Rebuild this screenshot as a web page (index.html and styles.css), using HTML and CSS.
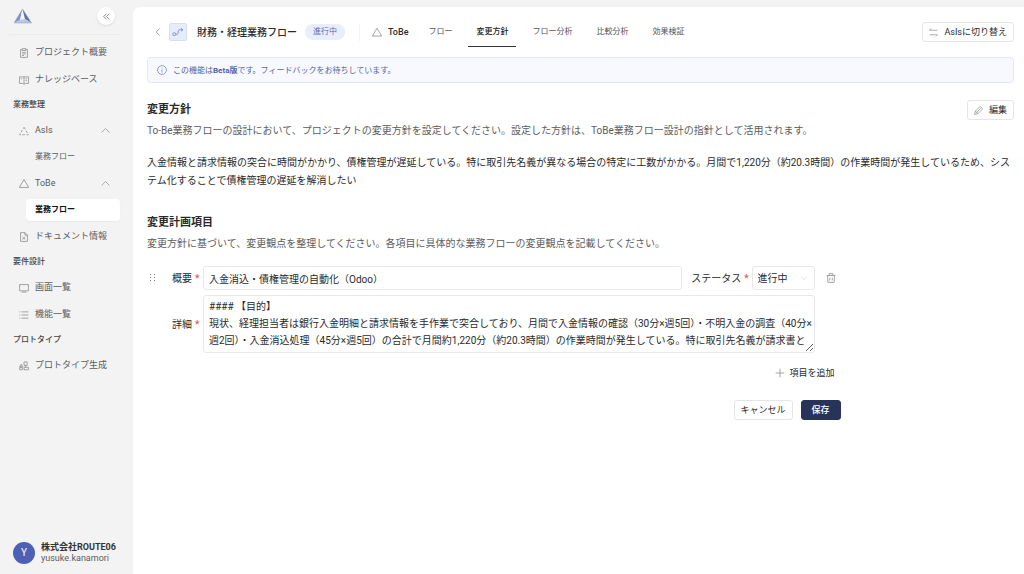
FILE: index.html
```html
<!DOCTYPE html>
<html lang="ja">
<head>
    <meta charset="UTF-8">
    <meta name="viewport" content="width=device-width, initial-scale=1.0">
    <title>変更方針</title>
    <link rel="stylesheet" href="styles.css">
</head>
<body>
    <aside class="sidebar">
        <div class="sidebar-head">
            <a class="logo" href="#" aria-label="ホーム">
                <svg width="18" height="17" viewBox="0 0 18 17">
                    <path d="M8.500 1 L0 15 L6 12 Z" fill="#7f93cf"/>
                    <path d="M8.500 1 L6 12 L11 11 Z" fill="#f1f4fb"/>
                    <path d="M8.500 1 L17.500 15 L11 11 Z" fill="#5a6ea8"/>
                    <path d="M0 15 L6 12 L11 11 L17.500 15 Z" fill="#b9c6e4"/>
                    <path d="M8.500 1 L0 15 H17.500 Z" fill="none" stroke="#8d9bc4" stroke-width=".5"/>
                </svg>
            </a>
            <button class="collapse-btn" aria-label="サイドバーを閉じる">
                <svg class="icon" width="9" height="9" viewBox="0 0 16 16"><path d="M8 3 L3 8 L8 13 M13 3 L8 8 L13 13"/></svg>
            </button>
        </div>

        <nav class="nav">
            <a class="nav-item" href="#">
                <svg class="icon" width="10" height="10" viewBox="0 0 16 16"><path d="M5 2.500H2.500V15H13.500V2.500H11M5 1H11V4H5ZM5 7H11M5 9.500H11M5 12H8"/></svg>
                プロジェクト概要
            </a>
            <a class="nav-item" href="#">
                <svg class="icon" width="10" height="10" viewBox="0 0 16 16"><path d="M8 3H.7V13.500H6L8 15L10 13.500H15.300V3ZM8 3V14M10.500 6H13M10.500 9H13M3 6H5"/></svg>
                ナレッジベース
            </a>

            <h2 class="nav-title">業務整理</h2>
            <button class="nav-item">
                <svg class="icon" width="10" height="10" viewBox="0 0 16 16"><path d="M8 2L15 14H1Z" stroke-dasharray="4 2.500"/></svg>
                AsIs
                <svg class="icon chevron" width="9" height="9" viewBox="0 0 16 16"><path d="M1 11.500L8 4.500L15 11.500"/></svg>
            </button>
            <a class="nav-sub" href="#">業務フロー</a>
            <button class="nav-item">
                <svg class="icon" width="10" height="10" viewBox="0 0 16 16"><path d="M8 1L15.500 13.500H.5Z"/></svg>
                ToBe
                <svg class="icon chevron" width="9" height="9" viewBox="0 0 16 16"><path d="M1 11.500L8 4.500L15 11.500"/></svg>
            </button>
            <a class="nav-sub active" href="#">業務フロー</a>
            <a class="nav-item" href="#">
                <svg class="icon" width="10" height="10" viewBox="0 0 16 16"><path d="M2.500 1H9.500L13.500 5V15H2.500ZM9.500 1V5H13.500M5.500 8L10 12M10 8L5.500 12"/></svg>
                ドキュメント情報
            </a>

            <h2 class="nav-title">要件設計</h2>
            <a class="nav-item" href="#">
                <svg class="icon" width="10" height="10" viewBox="0 0 16 16"><path d="M1 2.500H15V12.500H1ZM4 14.500H12"/></svg>
                画面一覧
            </a>
            <a class="nav-item" href="#">
                <svg class="icon" width="10" height="10" viewBox="0 0 16 16"><path d="M4 3H15M4 8H15M4 13H15M.5 3H2M.5 8H2M.5 13H2"/></svg>
                機能一覧
            </a>

            <h2 class="nav-title">プロトタイプ</h2>
            <a class="nav-item" href="#">
                <svg class="icon" width="10" height="10" viewBox="0 0 16 16"><path d="M8 1.500H13V7H8ZM3.500 5L6 9H1ZM1 10.500H5.500V14H1ZM10.500 7V10M8 10H15V14H8Z"/></svg>
                プロトタイプ生成
            </a>
        </nav>

        <div class="user">
            <span class="avatar">Y</span>
            <div class="user-text">
                <strong>株式会社ROUTE06</strong>
                <span>yusuke.kanamori</span>
            </div>
        </div>
    </aside>

    <main class="main">
        <header class="topbar">
            <a class="back" href="#" aria-label="戻る">
                <svg class="icon" width="10" height="10" viewBox="0 0 16 16"><path d="M11 2L5 8L11 14"/></svg>
            </a>
            <span class="flow-icon">
                <svg class="icon" width="12" height="12" viewBox="0 0 16 16"><circle cx="3" cy="11" r="2"/><path d="M5 11H7C9.500 11 7 5 9.500 5H14M12 3L14.500 5L12 7"/></svg>
            </span>
            <h1 class="title">財務・経理業務フロー</h1>
            <span class="badge">進行中</span>
            <span class="mode">
                <svg class="icon" width="10" height="10" viewBox="0 0 16 16"><path d="M8 2L15.500 14.500H.5Z"/></svg>
                ToBe
            </span>
            <nav class="tabs">
                <a class="tab" href="#">フロー</a>
                <a class="tab active" href="#">変更方針</a>
                <a class="tab" href="#">フロー分析</a>
                <a class="tab" href="#">比較分析</a>
                <a class="tab" href="#">効果検証</a>
            </nav>
            <button class="btn switch-btn">
                <svg class="icon" width="9" height="9" viewBox="0 0 16 16"><path d="M4 1L1 4H15M12 15L15 12H1"/></svg>
                AsIsに切り替え
            </button>
        </header>

        <div class="notice">
            <svg class="icon" width="10" height="10" viewBox="0 0 16 16"><circle cx="8" cy="8" r="7"/><path d="M8 7V12M8 4V5.500"/></svg>
            <p>この機能は<strong>Beta版</strong>です。フィードバックをお待ちしています。</p>
        </div>

        <section class="section">
            <div class="section-head">
                <h2>変更方針</h2>
                <button class="btn">
                    <svg class="icon" width="9" height="9" viewBox="0 0 16 16"><path d="M1 15L2.500 9L10 1.500C11.500 0 16 4.500 14.500 6L7 13.500ZM4 12L12 4M2.500 9L7 13.500"/></svg>
                    編集
                </button>
            </div>
            <p class="lead">To-Be業務フローの設計において、プロジェクトの変更方針を設定してください。設定した方針は、ToBe業務フロー設計の指針として活用されます。</p>
            <p class="policy">入金情報と請求情報の突合に時間がかかり、債権管理が遅延している。特に取引先名義が異なる場合の特定に工数がかかる。月間で1,220分（約20.3時間）の作業時間が発生しているため、システム化することで債権管理の遅延を解消したい</p>
        </section>

        <section class="section plan">
            <h2>変更計画項目</h2>
            <p class="lead">変更方針に基づいて、変更観点を整理してください。各項目に具体的な業務フローの変更観点を記載してください。</p>

            <form class="plan-form">
                <div class="item">
                    <button type="button" class="icon-btn" aria-label="並べ替え">
                        <svg class="grip" width="6" height="8" viewBox="0 0 6 8"><path d="M0 0H1V1H0ZM4 0H5V1H4ZM0 3H1V4H0ZM4 3H5V4H4ZM0 6H1V7H0ZM4 6H5V7H4Z"/></svg>
                    </button>
                    <label class="label" for="summary">概要<span class="required">*</span></label>
                    <div class="item-row">
                        <input class="field" type="text" id="summary" value="入金消込・債権管理の自動化（Odoo）">
                        <label class="label" for="status">ステータス<span class="required">*</span></label>
                        <div class="select-wrap">
                            <select class="field" id="status">
                                <option>進行中</option>
                            </select>
                            <svg class="icon" width="8" height="8" viewBox="0 0 16 16"><path d="M2 5L8 11L14 5"/></svg>
                        </div>
                    </div>
                    <button type="button" class="icon-btn trash" aria-label="削除">
                        <svg class="icon" width="10" height="10" viewBox="0 0 16 16"><path d="M1 4H15M5 4V1H11V4M2.500 4L3 15H13L13.500 4M6 7.500V12M10 7.500V12"/></svg>
                    </button>
                    <label class="label detail-label" for="detail">詳細<span class="required">*</span></label>
                    <textarea class="field detail" id="detail">#### 【目的】
現状、経理担当者は銀行入金明細と請求情報を手作業で突合しており、月間で入金情報の確認（30分×週5回）・不明入金の調査（40分×週2回）・入金消込処理（45分×週5回）の合計で月間約1,220分（約20.3時間）の作業時間が発生している。特に取引先名義が請求書と</textarea>
                </div>

                <div class="add-row">
                    <button type="button" class="add-btn">
                        <svg class="icon" width="10" height="10" viewBox="0 0 16 16"><path d="M8 1V15M1 8H15"/></svg>
                        項目を追加
                    </button>
                </div>
                <div class="actions">
                    <button type="button" class="btn">キャンセル</button>
                    <button type="submit" class="btn primary">保存</button>
                </div>
            </form>
        </section>
    </main>
</body>
</html>
```
FILE: styles.css
```css
* {
    margin: 0;
    padding: 0;
    box-sizing: border-box;
}

body {
    display: flex;
    min-height: 100vh;
    background: #f3f3f4;
    color: #2a2a2a;
    font-family: Roboto, "Noto Sans CJK JP", sans-serif;
    font-size: 10px;
    line-height: 17px;
}

button,
input,
select,
textarea {
    font: inherit;
    color: inherit;
}

button {
    border: none;
    background: none;
    cursor: pointer;
}

a {
    color: inherit;
    text-decoration: none;
}

.icon {
    flex: none;
    fill: none;
    stroke: #888;
    stroke-width: 1.2;
}

/* Sidebar */
.sidebar {
    flex: none;
    display: flex;
    flex-direction: column;
    width: 133px;
    padding: 0 13px 10px;
    color: #5c5c5c;
}

.sidebar-head {
    display: flex;
    align-items: center;
    justify-content: space-between;
    height: 35px;
    margin-left: -4px;
    padding: 0 5px 2px 5px;
    border-bottom: 1px solid #ebebec;
}

.logo {
    display: flex;
}

.collapse-btn {
    display: flex;
    align-items: center;
    justify-content: center;
    width: 18px;
    height: 18px;
    border-radius: 50%;
    background: #fff;
    box-shadow: 0 1px 3px rgba(0, 0, 0, 0.1);
}

.collapse-btn .icon {
    stroke: #555;
}

.nav {
    display: flex;
    flex-direction: column;
    padding-top: 4px;
}

.nav-item {
    display: flex;
    align-items: center;
    gap: 6px;
    height: 27px;
    padding: 0 10px 0 6px;
    font-size: 9px;
    white-space: nowrap;
}

.chevron {
    margin-left: auto;
}

.nav-title {
    height: 24px;
    color: #444;
    font-size: 8px;
    font-weight: 500;
    line-height: 24px;
}

.nav-sub {
    height: 22px;
    margin: 2px 0 2px 13px;
    padding-left: 9px;
    border-radius: 4px;
    font-size: 8px;
    line-height: 22px;
}

.nav-sub.active {
    background: #fff;
    color: #111;
    font-weight: 700;
    box-shadow: 0 1px 2px rgba(0, 0, 0, 0.04);
}

.user {
    display: flex;
    align-items: center;
    gap: 6px;
    margin-top: auto;
}

.avatar {
    flex: none;
    width: 22px;
    height: 22px;
    border-radius: 50%;
    background: #4d60b3;
    color: #fff;
    line-height: 22px;
    text-align: center;
}

.user-text {
    display: flex;
    flex-direction: column;
    font-size: 9px;
    line-height: 11px;
    white-space: nowrap;
}

.user-text strong {
    color: #333;
}

/* Main */
.main {
    flex: 1;
    min-width: 0;
    margin-top: 7px;
    padding: 10px 10px 24px 14px;
    border-radius: 8px 0 0 0;
    background: #fff;
}

.topbar {
    display: flex;
    align-items: center;
    height: 30px;
    white-space: nowrap;
}

.back {
    display: flex;
    padding: 0 6px;
}

.flow-icon {
    display: flex;
    align-items: center;
    justify-content: center;
    width: 18px;
    height: 18px;
    border: 1px solid #d6def2;
    border-radius: 2px;
    background: #e6ecfa;
}

.flow-icon .icon {
    stroke: #7b8ecb;
}

.title {
    margin: 0 8px 0 10px;
    font-size: 10px;
    font-weight: 500;
}

.badge {
    padding: 0 8px;
    border-radius: 8px;
    background: #e8eefb;
    color: #5b6bb0;
    font-size: 8px;
    line-height: 16px;
}

.mode {
    display: flex;
    align-items: center;
    gap: 6px;
    margin-left: 14px;
    padding-left: 12px;
    border-left: 1px solid #f3f3f3;
    font-size: 9px;
    font-weight: 500;
}

.tabs {
    display: flex;
    gap: 8px;
    margin-left: 12px;
}

.tab {
    padding: 0 8px;
    border-bottom: 1px solid transparent;
    color: #555;
    font-size: 8px;
    line-height: 28px;
}

.tab.active {
    border-color: #333;
    color: #222;
    font-weight: 500;
}

.btn {
    display: flex;
    align-items: center;
    gap: 6px;
    height: 20px;
    padding: 0 6px;
    border: 1px solid #e5e5e5;
    border-radius: 3px;
    background: #fff;
    font-size: 9px;
    white-space: nowrap;
}

.switch-btn {
    margin-left: auto;
}

.notice {
    display: flex;
    align-items: center;
    gap: 6px;
    height: 26px;
    margin-top: 10px;
    padding: 0 9px;
    border: 1px solid #e3e7ef;
    border-radius: 4px;
    background: #f7f9fe;
    color: #5364a8;
    font-size: 8px;
}

.notice .icon {
    stroke: #6f80bf;
}

.notice strong {
    font-weight: 700;
}

.section {
    padding-top: 17px;
}

.section-head {
    display: flex;
    align-items: center;
    justify-content: space-between;
}

.section h2 {
    font-size: 11px;
    font-weight: 700;
    line-height: 20px;
}

.lead {
    margin-top: 1px;
    color: #5c5c5c;
    line-height: 20px;
}

.policy {
    margin-top: 13px;
    line-height: 18px;
}

.plan {
    padding-top: 23px;
}

/* Plan form */
.plan-form {
    width: 80%;
    min-width: 480px;
    margin-top: 12px;
}

.item {
    display: grid;
    grid-template-columns: 25px 31px 1fr 26px;
    row-gap: 5px;
    align-items: center;
}

.item-row {
    display: flex;
    align-items: center;
}

.item-row .label {
    margin: 0 3px 0 9px;
}

.label {
    white-space: nowrap;
}

.required {
    margin-left: 3px;
    color: #e04848;
}

.field {
    border: 1px solid #e8e8e8;
    border-radius: 3px;
    background: #fff;
    outline: none;
}

input.field {
    flex: 1;
    min-width: 0;
    height: 24px;
    padding: 0 5px;
}

.select-wrap {
    position: relative;
    width: 63px;
}

select.field {
    display: block;
    width: 100%;
    height: 24px;
    padding: 0 5px;
    appearance: none;
}

.select-wrap .icon {
    position: absolute;
    top: 8px;
    right: 7px;
    stroke: #ccc;
    pointer-events: none;
}

.icon-btn {
    display: flex;
    padding-left: 3px;
}

.icon-btn.trash {
    padding-left: 11px;
}

.grip {
    fill: #777;
}

.detail-label {
    grid-column: 2;
}

.detail {
    display: block;
    width: 100%;
    height: 58px;
    padding: 2px 0 2px 5px;
    overflow: hidden;
    resize: vertical;
}

.add-row {
    display: flex;
    justify-content: flex-end;
    margin-top: 10px;
}

.add-btn {
    display: flex;
    align-items: center;
    gap: 5px;
    height: 20px;
    padding: 0 6px;
    font-size: 9px;
}

.actions {
    display: flex;
    justify-content: flex-end;
    gap: 8px;
    margin-top: 17px;
}

.btn.primary {
    padding: 0 10px;
    border-color: #28335a;
    background: #28335a;
    color: #fff;
    font-weight: 500;
}
```
